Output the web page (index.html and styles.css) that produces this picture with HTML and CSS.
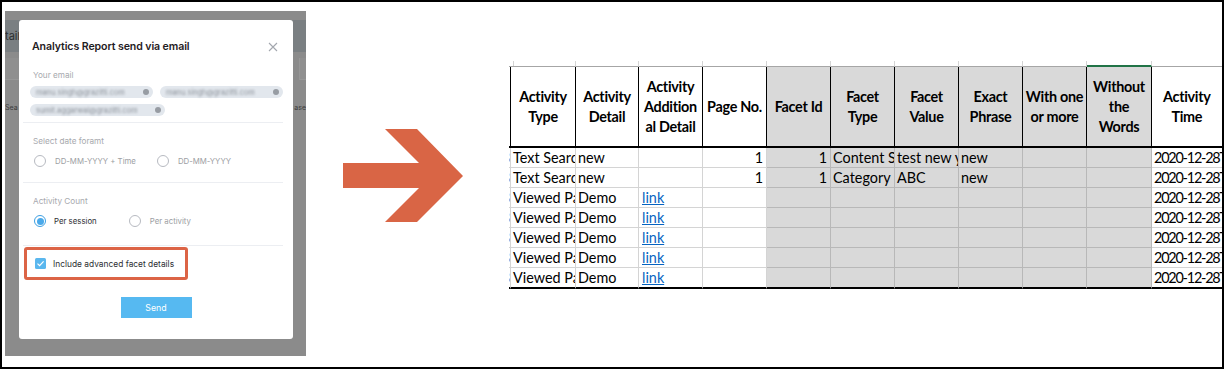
FILE: index.html
```html
<!DOCTYPE html>
<html lang="en">
<head>
  <meta charset="UTF-8">
  <meta name="viewport" content="width=device-width, initial-scale=1.0">
  <title>Analytics Report export</title>
  <link rel="stylesheet" href="styles.css">
</head>
<body>
  <div class="frame">

    <!-- screenshot of the dialog -->
    <div class="shot">
      <div class="page">
        <div class="page-top"></div>
        <div class="page-band"><span>tail</span></div>
        <div class="page-fields">
          <div class="ghost left"></div>
          <div class="ghost right"></div>
        </div>
        <div class="page-cols"><span>Sea</span><span>ase</span></div>
      </div>

      <div class="modal">
        <div class="modal-head">
          <h2>Analytics Report send via email</h2>
          <svg class="close" width="10" height="10" viewBox="0 0 10 10">
            <path d="M1 1 L9 9 M9 1 L1 9" stroke="#a3a7ae" stroke-width="1.1" fill="none"/>
          </svg>
        </div>

        <div class="field email">
          <div class="label">Your email</div>
          <div class="chips">
            <span class="chip w1"><span class="chip-text">manu.singh@grazitti.com</span><i></i></span>
            <span class="chip w1"><span class="chip-text">manu.singh@grazitti.com</span><i></i></span>
            <span class="chip w2"><span class="chip-text">sumit.aggarwal@grazitti.com</span><i></i></span>
          </div>
        </div>

        <div class="field">
          <div class="label">Select date foramt</div>
          <div class="options date">
            <label class="option"><span class="radio"></span>DD-MM-YYYY + Time</label>
            <label class="option"><span class="radio"></span>DD-MM-YYYY</label>
          </div>
        </div>

        <div class="field count">
          <div class="label">Activity Count</div>
          <div class="options per">
            <label class="option on"><span class="radio"></span>Per session</label>
            <label class="option"><span class="radio"></span>Per activity</label>
          </div>
        </div>

        <div class="facet-row">
          <div class="highlight">
            <span class="checkbox">
              <svg width="11" height="11" viewBox="0 0 11 11"><path d="M2.5 5.6 L4.6 7.7 L8.6 3.3" stroke="#fff" stroke-width="1.2" fill="none"/></svg>
            </span>
            <span class="check-label">Include advanced facet details</span>
          </div>
        </div>

        <div class="send-row"><button class="send">Send</button></div>
      </div>
    </div>

    <!-- arrow -->
    <svg class="arrow" width="126" height="100" viewBox="0 0 126 100">
      <polygon points="3,37 79,37 45,3 77,3 123,50 77,96 45,96 79,62 3,62" fill="#d96545"/>
    </svg>

    <!-- spreadsheet -->
    <div class="sheet">
      <div class="grid">
        <div class="c t"></div><div class="c t"></div><div class="c t"></div><div class="c t"></div><div class="c t"></div>
        <div class="c t"></div><div class="c t"></div><div class="c t"></div><div class="c t"></div><div class="c t"></div>
        <div class="c t sel"></div><div class="c t"></div>

        <div class="c h edge"></div>
        <div class="c h">Activity<br>Type</div>
        <div class="c h">Activity<br>Detail</div>
        <div class="c h">Activity<br>Addition<br>al Detail</div>
        <div class="c h">Page No.</div>
        <div class="c h g">Facet Id</div>
        <div class="c h g">Facet<br>Type</div>
        <div class="c h g">Facet<br>Value</div>
        <div class="c h g">Exact<br>Phrase</div>
        <div class="c h g">With one<br>or more</div>
        <div class="c h g">Without<br>the<br>Words</div>
        <div class="c h last">Activity<br>Time</div>

        <div class="c edge">8</div><div class="c">Text Search</div><div class="c">new</div><div class="c"></div><div class="c num">1</div>
        <div class="c g num">1</div><div class="c g">Content Search</div><div class="c g">test new year</div><div class="c g">new</div><div class="c g"></div><div class="c g"></div><div class="c dt">2020-12-28T10:14:02</div>

        <div class="c edge">8</div><div class="c">Text Search</div><div class="c">new</div><div class="c"></div><div class="c num">1</div>
        <div class="c g num">1</div><div class="c g">Category</div><div class="c g">ABC</div><div class="c g">new</div><div class="c g"></div><div class="c g"></div><div class="c dt">2020-12-28T10:14:37</div>

        <div class="c edge">8</div><div class="c">Viewed Page</div><div class="c">Demo</div><div class="c"><a href="#">link</a></div><div class="c"></div>
        <div class="c g"></div><div class="c g"></div><div class="c g"></div><div class="c g"></div><div class="c g"></div><div class="c g"></div><div class="c dt">2020-12-28T10:15:10</div>

        <div class="c edge">8</div><div class="c">Viewed Page</div><div class="c">Demo</div><div class="c"><a href="#">link</a></div><div class="c"></div>
        <div class="c g"></div><div class="c g"></div><div class="c g"></div><div class="c g"></div><div class="c g"></div><div class="c g"></div><div class="c dt">2020-12-28T10:15:42</div>

        <div class="c edge">8</div><div class="c">Viewed Page</div><div class="c">Demo</div><div class="c"><a href="#">link</a></div><div class="c"></div>
        <div class="c g"></div><div class="c g"></div><div class="c g"></div><div class="c g"></div><div class="c g"></div><div class="c g"></div><div class="c dt">2020-12-28T10:16:05</div>

        <div class="c edge">8</div><div class="c">Viewed Page</div><div class="c">Demo</div><div class="c"><a href="#">link</a></div><div class="c"></div>
        <div class="c g"></div><div class="c g"></div><div class="c g"></div><div class="c g"></div><div class="c g"></div><div class="c g"></div><div class="c dt">2020-12-28T10:16:48</div>

        <div class="c edge b">8</div><div class="c b">Viewed Page</div><div class="c b">Demo</div><div class="c b"><a href="#">link</a></div><div class="c b"></div>
        <div class="c g b"></div><div class="c g b"></div><div class="c g b"></div><div class="c g b"></div><div class="c g b"></div><div class="c g b"></div><div class="c b dt">2020-12-28T10:17:20</div>
      </div>
    </div>

  </div>
</body>
</html>
```

FILE: styles.css
```css
html, body {
  margin: 0;
  padding: 0;
  background: #fff;
}

.frame {
  width: 1224px;
  height: 369px;
  box-sizing: border-box;
  border: 2px solid #000;
  display: flex;
  align-items: flex-start;
  overflow: hidden;
}

/* Left: screenshot of the dialog over a dimmed page */
.shot {
  position: relative;
  flex: none;
  width: 301px;
  height: 345px;
  margin: 9px 0 0 3px;
  background: #8b8b8b;
  overflow: hidden;
  font-family: Inter, "Open Sans", sans-serif;
}

.page-top {
  height: 9px;
}

.page-band {
  height: 32px;
  background: #7a7f82;
  display: flex;
  align-items: center;
  font-size: 11px;
  color: #2c2f31;
}

.page-fields {
  display: flex;
  justify-content: space-between;
  margin-top: 6px;
  height: 22px;
}

.ghost {
  background: #8f8f8f;
  border-bottom: 1px solid #979797;
}

.ghost.left {
  width: 14px;
}

.ghost.right {
  width: 6px;
  border-left: 1px solid #979797;
}

.page-cols {
  display: flex;
  justify-content: space-between;
  margin-top: 23px;
  font-size: 7px;
  color: #3c3c3c;
}

.modal {
  position: absolute;
  left: 14px;
  top: 9px;
  width: 274px;
  height: 319px;
  box-sizing: border-box;
  padding: 0 10px 0 4px;
  background: #fff;
  border-radius: 3px;
  display: flex;
  flex-direction: column;
}

.modal-head {
  display: flex;
  justify-content: space-between;
  align-items: center;
  padding: 20px 5px 0 9px;
}

.modal-head h2 {
  margin: 0;
  font-size: 10.6px;
  font-weight: 600;
  line-height: 14px;
  color: #1f2023;
  letter-spacing: -0.1px;
}

.field {
  padding: 13px 6px 15px 10px;
  border-bottom: 1px solid #eceef2;
}

.field.email {
  padding-top: 16px;
  padding-bottom: 6px;
}

.field.count {
  padding-bottom: 18px;
}

.label {
  font-size: 8.2px;
  line-height: 10px;
  color: #a7a9ae;
}

.chips {
  display: flex;
  flex-wrap: wrap;
  gap: 6px 7px;
  margin: 6px -6px 0 -3px;
}

.chip {
  height: 12px;
  box-sizing: border-box;
  padding: 0 4px 0 6px;
  border-radius: 6px;
  background: #e2e7ed;
  display: flex;
  align-items: center;
  justify-content: space-between;
  filter: blur(0.4px);
}

.chip.w1 {
  width: 123px;
}

.chip.w2 {
  width: 135px;
}

.chip-text {
  font-size: 7.4px;
  color: #8a9098;
  filter: blur(1.3px);
}

.chip i {
  width: 6px;
  height: 6px;
  border-radius: 50%;
  background: #979ca3;
  filter: blur(0.6px);
}

.options {
  display: flex;
  gap: 21px;
  margin-top: 9px;
  padding-left: 1px;
}

.options.per {
  gap: 32px;
}

.option {
  display: flex;
  align-items: center;
  gap: 9px;
  font-size: 7.8px;
  line-height: 12px;
  color: #9c9ea3;
}

.radio {
  width: 12px;
  height: 12px;
  box-sizing: border-box;
  border: 1px solid #b7bac1;
  border-radius: 50%;
  background: #fff;
  display: flex;
  align-items: center;
  justify-content: center;
}

.option.on {
  color: #2d2f33;
  gap: 8px;
}

.option.on .radio {
  border-color: #3d9fe2;
}

.option.on .radio::after {
  content: '';
  width: 7px;
  height: 7px;
  border-radius: 50%;
  background: #4aa9ea;
}

.facet-row {
  padding: 1px 0 0 1px;
}

.highlight {
  width: 164px;
  height: 33px;
  box-sizing: border-box;
  border: 3px solid #dc6446;
  border-radius: 3px;
  display: flex;
  align-items: center;
  padding-left: 8px;
}

.checkbox {
  width: 11px;
  height: 11px;
  border-radius: 1.5px;
  background: #5ab7ee;
  display: flex;
}

.check-label {
  margin-left: 7px;
  font-size: 8.4px;
  color: #2d2f33;
}

.send-row {
  display: flex;
  justify-content: center;
  margin: 17px -10px 0 -4px;
}

.send {
  width: 71px;
  height: 21px;
  border: 0;
  padding: 0;
  background: #56b9f1;
  color: #fff;
  font-family: Inter, "Open Sans", sans-serif;
  font-size: 8.8px;
}

/* Arrow */
.arrow {
  flex: none;
  margin: 124px 0 0 34px;
}

/* Right: spreadsheet */
.sheet {
  flex: 1 1 auto;
  min-width: 0;
  margin: 59px 0 0 43px;
  overflow: hidden;
  font-family: Lato, "Open Sans", sans-serif;
  font-size: 14.4px;
  color: #000;
}

.grid {
  display: grid;
  grid-template-columns: 2px 65px 63px 64px 64px 64px 64px 64px 64px 64px 65px 90px;
  grid-template-rows: 6px 81px repeat(6, 20px) 21px;
}

.c {
  box-sizing: border-box;
  border-right: 1px solid #d4d4d4;
  border-bottom: 1px solid #d4d4d4;
  padding: 0 2px;
  line-height: 19px;
  white-space: nowrap;
  overflow: hidden;
}

.c.t {
  border-bottom-color: #a6a6a6;
}

.c.t.sel {
  border-bottom: 2px solid #217346;
}

.c.g {
  background: #d9d9d9;
  border-color: #b8b8b8;
}

.c.h {
  border-right-color: #000;
  border-bottom: 2px solid #000;
  display: flex;
  align-items: center;
  justify-content: center;
  text-align: center;
  white-space: nowrap;
  font-weight: bold;
  letter-spacing: -0.3px;
  line-height: 20px;
}

.c.h.last {
  border-right: 0;
  justify-content: flex-start;
  padding-left: 11px;
}

.c.edge {
  padding: 0;
  direction: rtl;
  color: #7a2a10;
}

.c.num {
  text-align: right;
  padding-right: 3px;
}

.c.dt {
  letter-spacing: -1.2px;
}

.c.b {
  border-bottom: 2px solid #000;
}

.c a {
  color: #0563c1;
  text-decoration: underline;
  margin-left: 1px;
}
```
